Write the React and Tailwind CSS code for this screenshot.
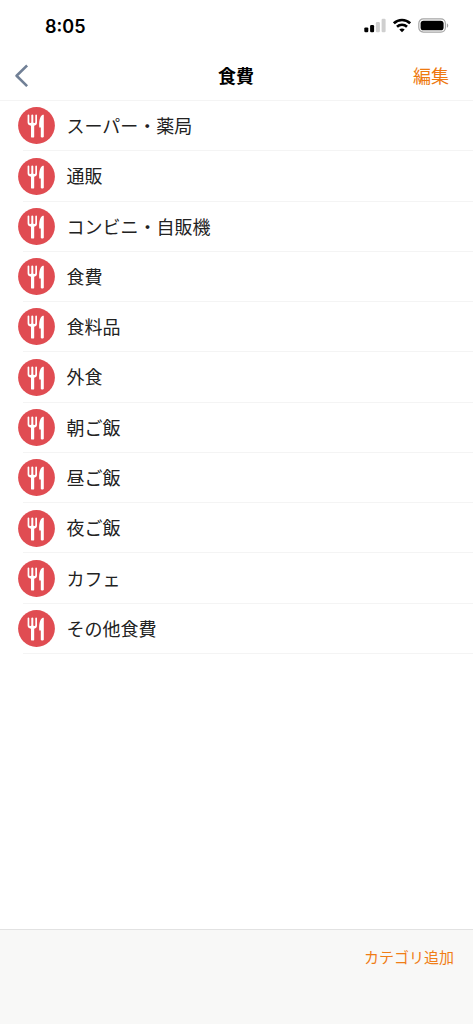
const categories = [
  'スーパー・薬局',
  '通販',
  'コンビニ・自販機',
  '食費',
  '食料品',
  '外食',
  '朝ご飯',
  '昼ご飯',
  '夜ご飯',
  'カフェ',
  'その他食費',
];

function MealIcon() {
  return (
    <svg className="h-[37px] w-[37px] shrink-0" viewBox="0 0 37 37" aria-hidden="true">
      <circle cx="18.5" cy="18.5" r="18.4" fill="#e04c52" />
      <g fill="#fff">
        <path d="M9.6 8.2c0-.8 1.7-.8 1.7 0v7c0 1 2 1 2 0v-7c0-.8 2-.8 2 0v7c0 1 2 1 2 0v-7c0-.8 1.7-.8 1.7 0v7.4c0 1.8-1 2.9-2.8 3.2v10.9c0 1.2-3.2 1.2-3.2 0V18.8c-2-.3-3.4-1.4-3.4-3.2z" />
        <path d="M25.8 8.1v21.6c0 1-3 1-3 0v-9.1h-1.5c-.5-5.7.4-11.1 3-12.6.8-.5 1.5-.5 1.5.1z" />
      </g>
    </svg>
  );
}

function StatusBar() {
  return (
    <div className="flex h-[51px] items-center justify-between pr-6 pl-[45px]">
      <span className="pt-0.5 font-['Inter'] text-[18px] leading-6 font-semibold text-black">8:05</span>
      <div className="flex items-center">
        <svg className="h-[15px] w-[22px]" viewBox="0 0 22 15" aria-hidden="true">
          <rect x="0.3" y="9.4" width="4" height="4.8" rx="1.2" />
          <rect x="6.1" y="7" width="4" height="7.2" rx="1.2" />
          <rect x="11.9" y="4" width="4" height="10.2" rx="1.2" fill="#cfcfcf" />
          <rect x="17.6" y="0.8" width="4" height="13.4" rx="1.2" fill="#cfcfcf" />
        </svg>
        <svg className="ml-[7px] h-[15px] w-[18px]" viewBox="0 0 18 15" fill="none" stroke="#000" strokeWidth="2.6" aria-hidden="true">
          <path d="M.9 5.3C5.4.9 12.6.9 17.1 5.3" />
          <path d="M4 8.8c2.8-2.7 7.2-2.7 10 0" />
          <path d="M6.3 11.6c1.5-1.4 3.9-1.4 5.4 0L9 14.3z" fill="#000" stroke="none" />
        </svg>
        <svg className="ml-[7px] h-[15px] w-[31px]" viewBox="0 0 31 15" aria-hidden="true">
          <rect x="0.8" y="0.9" width="26.6" height="13.2" rx="4.5" fill="none" stroke="#a5a5a5" strokeWidth="1.2" />
          <rect x="2.6" y="2.7" width="23" height="9.6" rx="2.9" />
          <path d="M28.9 5.2c1.8.8 1.8 3.8 0 4.6z" fill="#a5a5a5" />
        </svg>
      </div>
    </div>
  );
}

export default function App() {
  return (
    <div className="flex h-screen w-full flex-col overflow-hidden bg-white font-['Noto_Sans_CJK_JP',sans-serif] text-[#222]">
      <StatusBar />
      <header className="grid h-[50px] shrink-0 grid-cols-[1fr_auto_1fr] items-center border-b border-[#f4f4f4] pr-6 pb-0.5 pl-[14px]">
        <button aria-label="戻る" className="w-4">
          <svg className="h-6 w-4" viewBox="0 0 16 24" fill="none" stroke="#718096" strokeWidth="2.6" strokeLinecap="square" strokeLinejoin="round">
            <path d="M12.2 3.4 2.6 12.8l9.6 9.4" />
          </svg>
        </button>
        <h1 className="pl-[9px] text-center text-[18px] leading-6 font-bold text-black">食費</h1>
        <button className="justify-self-end text-[18px] leading-6 text-[#ee7a10]">編集</button>
      </header>
      <ul>
        {categories.map((name) => (
          <li key={name} className="flex h-[50.28px] pl-[18px]">
            <div className="flex flex-1 items-start">
              <div className="pt-[6.4px]">
                <MealIcon />
              </div>
              <div className="-ml-8 flex h-full flex-1 items-center border-b border-[#f4f4f4] pb-px pl-[43.5px]">
                <span className="text-[18px] leading-6">{name}</span>
              </div>
            </div>
          </li>
        ))}
      </ul>
      <footer className="mt-auto flex h-[95px] shrink-0 items-start justify-end border-t border-[#e2e2e2] bg-[#f8f8f7] pt-[15px] pr-[19px]">
        <button className="text-[15px] leading-6 text-[#f07d16]">カテゴリ追加</button>
      </footer>
    </div>
  );
}
